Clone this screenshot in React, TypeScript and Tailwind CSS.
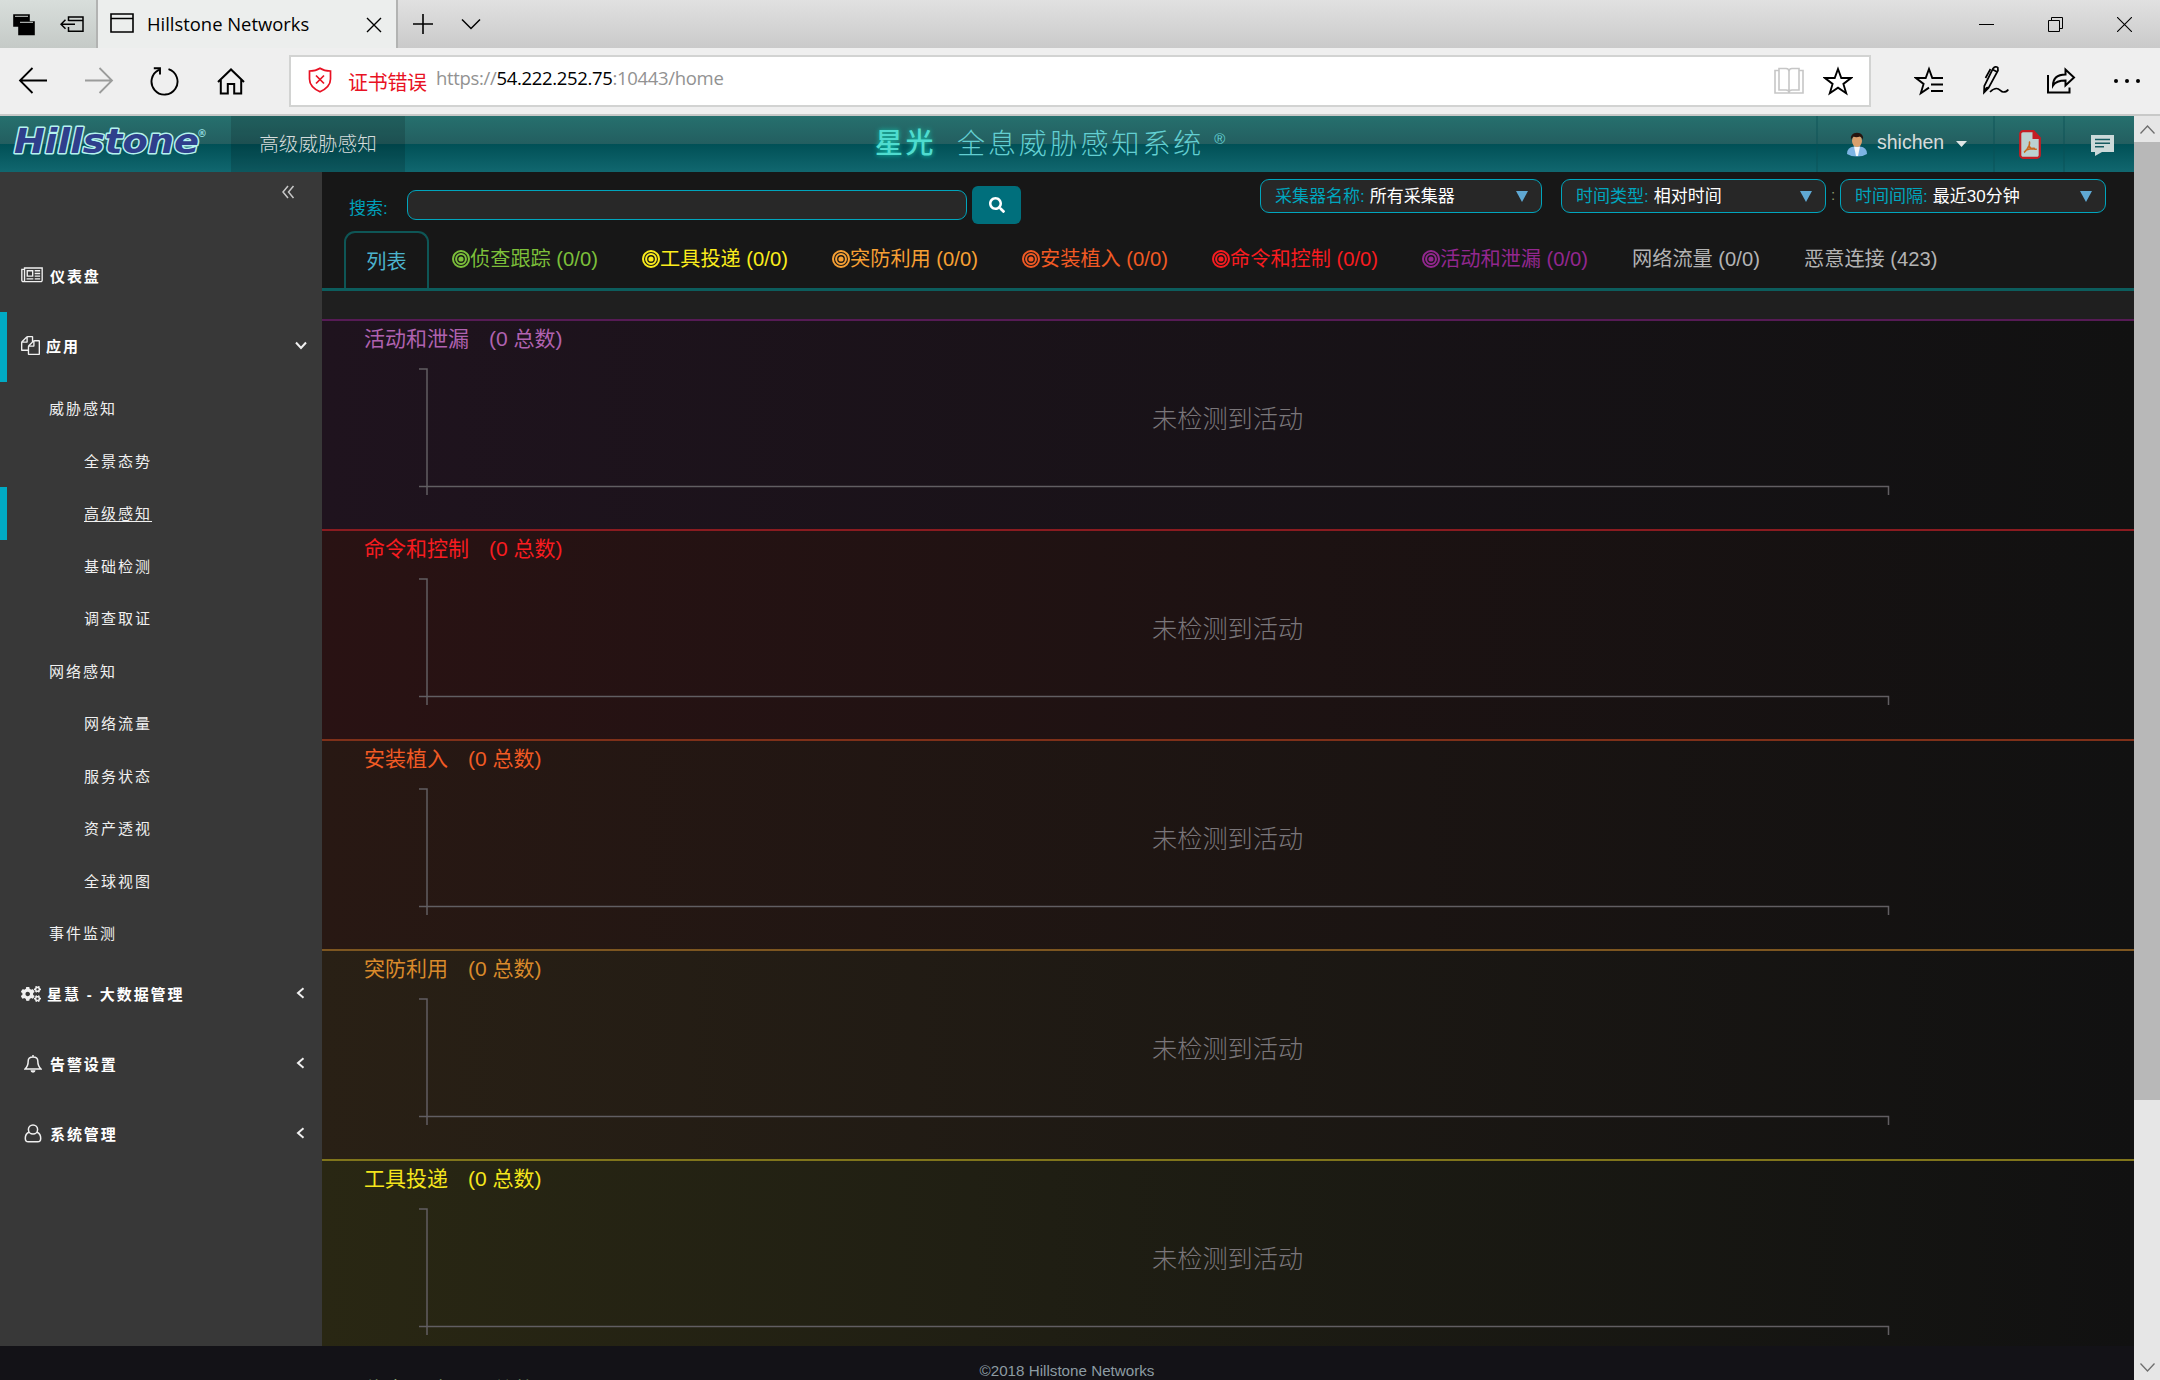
import React from "react";
import { FaCogs, FaSearch } from "react-icons/fa";

const CJK = "font-['Liberation_Sans','Noto_Sans_CJK_SC',sans-serif]";
const UI = "font-['Open_Sans','Noto_Sans_CJK_SC',sans-serif]";

type IconProps = { w: number; h: number; sw?: number; className?: string; children: React.ReactNode };

function Icon({ w, h, sw = 1.6, className = "", children }: IconProps) {
  return (
    <svg
      width={w}
      height={h}
      viewBox={`0 0 ${w} ${h}`}
      fill="none"
      stroke="currentColor"
      strokeWidth={sw}
      className={`shrink-0 ${className}`}
    >
      {children}
    </svg>
  );
}

function TitleBar() {
  return (
    <div className="flex h-12 bg-linear-to-b from-[#e1e1e1] to-[#cacaca] text-black">
      <div className="flex w-24 items-center bg-linear-to-b from-[#d8dedb] to-[#c5cac7] pl-[13px]">
        <Icon w={22} h={22} className="mt-px">
          <path d="M1 1h15v11H1z" fill="currentColor" />
          <path d="M6 8h15v12.5H6z" fill="currentColor" />
          <path d="M2 2.3h13M7 8.3h13" stroke="#cfd4d1" strokeWidth="1" />
        </Icon>
        <Icon w={24} h={17} sw={1.5} className="ml-[25px]">
          <path d="M8.500 5V1H23v14.200H8.500V11M8.500 4.500H23M1 8.200h14M5.500 3.700L1 8.200l4.500 4.500" />
        </Icon>
      </div>
      <div className="flex w-[302px] items-center border-x-2 border-[#b2b3b2] bg-[#eceeed] pl-3">
        <Icon w={24} h={20} className="mb-0.5">
          <path d="M1 1h22v18H1zM1 5.500h22" />
        </Icon>
        <span className={`ml-[13px] w-[200px] text-[18.400px] leading-6 tracking-[0px] ${UI}`}>Hillstone Networks</span>
        <Icon w={16} h={16} sw={1.4} className="ml-[19px] mt-px">
          <path d="M1 1l14 14M15 1L1 15" />
        </Icon>
      </div>
      <div className="flex flex-1 items-center pl-[15px]">
        <Icon w={20} h={20}>
          <path d="M10 0v20M0 10h20" />
        </Icon>
        <Icon w={20} h={12} sw={1.5} className="ml-[28px]">
          <path d="M1 1.500l9 9 9-9" />
        </Icon>
      </div>
      <div className="flex items-center gap-[54px] pr-7">
        <Icon w={15} h={15} sw={1}>
          <path d="M0 7.500h15" />
        </Icon>
        <Icon w={15} h={15} sw={1}>
          <path d="M.5 3.500h11v11H.5zM3.500 3.500v-3h11v11h-3" />
        </Icon>
        <Icon w={15} h={15} sw={1.1}>
          <path d="M0 0l15 15M15 0L0 15" />
        </Icon>
      </div>
    </div>
  );
}

function Cell({ children }: { children: React.ReactNode }) {
  return <div className="flex w-[66px] items-center justify-center">{children}</div>;
}

function Toolbar() {
  return (
    <div className="flex h-[68px] border-b-2 border-[#c8c9c8] bg-[#efefef] text-black">
      <div className="flex">
        <Cell>
          <Icon w={30} h={27} sw={1.800} className="-mt-px">
            <path d="M29 13.500H2M14.500 1L2 13.500 14.500 26" />
          </Icon>
        </Cell>
        <Cell>
          <Icon w={30} h={27} sw={1.8} className="-mt-px text-[#9b9c9b]">
            <path d="M1 13.500h27M15.500 1L28 13.500 15.500 26" />
          </Icon>
        </Cell>
        <Cell>
          <Icon w={30} h={30} sw={1.9}>
            <path d="M18.500 3.200A13 13 0 1 1 9 3.800M3.800 2.200H10v6.300" />
          </Icon>
        </Cell>
        <Cell>
          <Icon w={28} h={27} sw={2}>
            <path d="M1 14L14 1.500 27 14M3.800 12v13.500h7V16h6.400v9.500h7V12" />
          </Icon>
        </Cell>
      </div>
      <div className="mt-[7px] ml-[25px] flex h-[52px] w-[1582px] items-center border-2 border-[#d2d3d2] bg-white">
        <Icon w={24} h={26} sw={1.7} className="ml-[17px] mb-0.5 text-[#e81123]">
          <path d="M12 1.200c3 2 6.500 2.800 10.500 2.800v8c0 6-4.500 10-10.500 12.800C6 22 1.500 18 1.500 12V4C5.500 4 9 3.200 12 1.200zM8 8.500l8 8M16 8.500l-8 8" />
        </Icon>
        <span className={`mt-1 ml-[16px] w-[88px] text-[20px] leading-6 font-normal tracking-[-0.300px] text-[#e81123] ${UI}`}>证书错误</span>
        <span className={`mb-1.5 text-[18.500px] leading-6 tracking-[-0.330px] text-[#929292] ${UI}`}>
          https://<span className="text-black">54.222.252.75</span>:10443/home
        </span>
        <Icon w={30} h={28} sw={1.600} className="ml-auto text-[#c6c6c6]">
          <path d="M5 3.500H1V26h28V3.500h-4M5 1.500h7q3 0 3 3 0-3 3-3h7v21.500h-7q-3 0-3 2.500 0-2.500-3-2.500H5zM15 4v22" />
        </Icon>
        <Icon w={30} h={30} sw={1.900} className="mr-[16px] ml-[19px]">
          <path d="M15 3l3.300 9H28l-7.600 5.900 2.800 9.300L15 21.600l-8.200 5.600 2.800-9.300L2 12h9.700z" />
        </Icon>
      </div>
      <div className="ml-auto flex">
        <Cell>
          <Icon w={30} h={30} sw={1.900}>
            <path d="M29 12h-10.700L15 3l-3.300 9H2l7.600 5.900-2.800 9.300L15 21.600M17 18.500h12M17 25h12M18 12h11" />
          </Icon>
        </Cell>
        <Cell>
          <Icon w={28} h={30} sw={1.700} className="mb-0.5">
            <path d="M12 3.500q2.500-3 4.800-.8L17 5.500 7.500 23 3 27.500l.3-6.500zM11.500 4.500l4.800 2.500M9.500 4L4.500 13M3 27.500c2-5 3-6 5-4" />
            <path d="M9 27c2-2 4-3.500 6.500-3.500 3.500 0 4 3.500 7 3.500 2.500 0 4-1.200 4.800-2.500" />
          </Icon>
        </Cell>
        <Cell>
          <Icon w={30} h={28} sw={2}>
            <path d="M2 8v17.500h21.500v-5M7 18.500c0-8 5-11 12.500-11V2.500l8.500 8-8.500 8v-5c-6 0-10 1-12.500 5z" />
          </Icon>
        </Cell>
        <Cell>
          <Icon w={28} h={6} sw={0}>
            <g fill="currentColor">
              <circle cx="3" cy="3" r="2" />
              <circle cx="14" cy="3" r="2" />
              <circle cx="25" cy="3" r="2" />
            </g>
          </Icon>
        </Cell>
      </div>
    </div>
  );
}

function Header() {
  return (
    <header
      className={`flex h-14 bg-[linear-gradient(to_bottom,#26706e_0%,#235e60_50%,#005056_50%,#11676f_100%)] text-[#d5dcdc] ${CJK}`}
    >
      <div className="w-[231px] pt-2 pl-2.5">
        <svg width="200" height="36" viewBox="0 0 200 36" className="overflow-visible font-['DejaVu_Sans',sans-serif] font-bold italic">
          <text
            x="4" y="29" fontSize="33" textLength="185" lengthAdjust="spacingAndGlyphs"
            fill="#2f3f8c" stroke="#b5f3ee" strokeWidth="2.800" paintOrder="stroke" strokeLinejoin="round"
          >
            Hillstone
          </text>
          <text x="187" y="13" fontSize="10" fontStyle="normal" fill="#8fd8dc">®</text>
        </svg>
      </div>
      <div className="flex w-[174px] items-center justify-center bg-black/15 pt-px text-[19.600px] font-light">高级威胁感知</div>
      <div className="flex flex-1 items-center">
        <span className="ml-[470px] text-[28px] leading-none font-medium tracking-[2.500px] text-[#4fdccf] [text-shadow:0_0_5px_#12c8b0]">
          星光
        </span>
        <span className="ml-[21px] pt-px text-[28px] leading-none font-light tracking-[2.900px] text-[#62cfd2]">全息威胁感知系统</span>
        <span className="mb-3 ml-2.5 text-[15px] leading-none text-[#62cfd2]">®</span>
      </div>
      <div className="flex w-[177px] items-center border-l-2 border-[#0b4f54]/40 pl-[28px]">
        <svg width="22" height="25" viewBox="0 0 22 25">
          <path d="M1 22q0-7 7-7.500h6q7 .5 7 7.500-4 2.500-10 2.500T1 22z" fill="#7db4e4" />
          <path d="M8 14.500h6l-2 9.500h-2z" fill="#f4f6f8" />
          <ellipse cx="11" cy="9" rx="5" ry="6" fill="#d9a06c" />
          <path d="M5 8Q4 1 11 .8 18 1 17 8q-1-3-3-3.500Q10 6 7.500 4.500 5.500 6 5 8z" fill="#26150f" />
        </svg>
        <span className="ml-[9px] w-[69px] pb-0.5 text-[19.500px] leading-none">shichen</span>
        <svg width="11" height="6" viewBox="0 0 11 6" className="ml-2.5">
          <path d="M0 0h11L5.500 6z" fill="#dfe6e6" />
        </svg>
      </div>
      <div className="flex w-[70px] items-center justify-center border-l-2 border-[#0b4f54]/40">
        <svg width="22" height="29" viewBox="0 0 22 29" className="ml-0.5">
          <path d="M4 1.200h10.500L20.800 8v17a2.800 2.800 0 0 1-2.800 2.800H4A2.800 2.800 0 0 1 1.200 25V4A2.800 2.800 0 0 1 4 1.200z" fill="#bcd2d1" stroke="#c41e24" strokeWidth="2.200" />
          <path d="M13.500 1v8h8z" fill="#c41e24" />
          <path d="M10.200 11.500q.8 1-.2 4.500M9.800 16Q8 20.500 5 22.500M9.800 16q2.200 3.800 8 3.200M7 20q5-2 9-1.500" fill="none" stroke="#c8691e" strokeWidth="1.600" />
        </svg>
      </div>
      <div className="flex w-[71px] items-center border-l-2 border-[#0b4f54]/40 pl-[26px]">
        <svg width="23" height="21" viewBox="0 0 23 21" className="mt-0.5">
          <path d="M0 0h23v17H11l-7 4v-4H0z" fill="#ccd9d9" />
          <path d="M4 4.500h15M4 8.200h15M4 11.800h9" stroke="#155a60" strokeWidth="1.600" />
        </svg>
      </div>
    </header>
  );
}

const subItems: { t: string; deep?: boolean; active?: boolean }[] = [
  { t: "威胁感知" },
  { t: "全景态势", deep: true },
  { t: "高级感知", deep: true, active: true },
  { t: "基础检测", deep: true },
  { t: "调查取证", deep: true },
  { t: "网络感知" },
  { t: "网络流量", deep: true },
  { t: "服务状态", deep: true },
  { t: "资产透视", deep: true },
  { t: "全球视图", deep: true },
  { t: "事件监测" },
];

function TopItem({ icon, label, gap, arrow, active }: { icon: React.ReactNode; label: string; gap: string; arrow?: "down" | "left"; active?: boolean }) {
  return (
    <div className={`flex h-[70px] items-center border-l-[7px] pr-[14px] pl-[14px] ${active ? "border-[#00aac4]" : "border-transparent"}`}>
      {icon}
      <span className={`text-[15px] font-bold tracking-[1.900px] text-white ${gap}`}>{label}</span>
      {arrow === "down" && (
        <Icon w={14} h={9} sw={2} className="ml-auto mb-1">
          <path d="M2 1.500l5 5.500 5-5.500" />
        </Icon>
      )}
      {arrow === "left" && (
        <Icon w={9} h={12} sw={2} className="ml-auto mr-[3px] mb-1">
          <path d="M7.500 1.200L2 6l5.500 4.800" />
        </Icon>
      )}
    </div>
  );
}

function Sidebar() {
  return (
    <aside className={`w-[322px] shrink-0 bg-[#383838] text-[#f0f0f0] ${CJK}`}>
      <div className="flex h-[70px] justify-end pt-[13px] pr-[27px]">
        <Icon w={14} h={14} sw={1.500} className="text-[#c8c8c8]">
          <path d="M7 1L2 7l5 6M12.500 1l-5 6 5 6" />
        </Icon>
      </div>
      <TopItem
        gap="ml-[7px] mt-px"
        label="仪表盘"
        icon={
          <svg width="22" height="19" viewBox="0 0 2048 1792" fill="currentColor" className="mb-1">
            <path d="M1024 512h-384v384h384v-384zm128 640v128h-640v-128h640zm0-768v640h-640v-640h640zm640 768v128h-512v-128h512zm0-256v128h-512v-128h512zm0-256v128h-512v-128h512zm0-256v128h-512v-128h512zm-1536 960v-960h-128v960q0 26 19 45t45 19 45-19 19-45zm1664 0v-1088h-1536v1088q0 33-11 64h1483q26 0 45-19t19-45zm128-1216v1216q0 80-56 136t-136 56h-1664q-80 0-136-56t-56-136v-1088h256v-128h1792z" />
          </svg>
        }
      />
      <TopItem
        active
        arrow="down"
        gap="ml-[6px]"
        label="应用"
        icon={
          <svg width="19" height="19" viewBox="0 0 1792 1792" fill="currentColor" className="mb-1">
            <path d="M1696 384q40 0 68 28t28 68v1216q0 40-28 68t-68 28h-960q-40 0-68-28t-28-68v-288h-544q-40 0-68-28t-28-68v-672q0-40 20-88t48-76l408-408q28-28 76-48t88-20h416q40 0 68 28t28 68v328q68-40 128-40h416zm-544 213l-299 299h299v-299zm-640-384l-299 299h299v-299zm196 647l316-316v-416h-384v416q0 40-28 68t-68 28h-416v640h512v-256q0-40 20-88t48-76zm956 804v-1152h-384v416q0 40-28 68t-68 28h-416v640h896z" />
          </svg>
        }
      />
      {subItems.map((s) => (
        <div
          key={s.t}
          className={`flex h-[52.500px] items-center border-l-[7px] pt-0.5 ${s.active ? "border-[#00aac4]" : "border-transparent"} ${s.deep ? "pl-[77px]" : "pl-[42px]"}`}
        >
          <span className={`text-[15px] leading-5 tracking-[2px] ${s.active ? "underline underline-offset-2" : ""}`}>{s.t}</span>
        </div>
      ))}
      <TopItem arrow="left" gap="ml-[6px] mt-px" label="星慧 - 大数据管理" icon={<FaCogs size={20} className="mb-0.5" />} />
      <TopItem
        arrow="left"
        gap="ml-2 mt-px"
        label="告警设置"
        icon={
          <Icon w={18} h={18} sw={1.500} className="ml-[3px] mb-0.5">
            <path d="M9 0v2M1 14q3.200-3 3.200-8 0-4 4.800-4t4.800 4q0 5 3.200 8z" />
            <path d="M6.500 15.200a2.500 2.500 0 0 0 5 0z" fill="currentColor" stroke="none" />
          </Icon>
        }
      />
      <TopItem
        arrow="left"
        gap="ml-2 mt-px"
        label="系统管理"
        icon={
          <Icon w={18} h={19} sw={1.500} className="ml-[3px] mb-0.5">
            <circle cx="9" cy="5.500" r="4.600" />
            <path d="M5 8.200q-3.700 1.500-3.700 6 0 3.600 3 3.600h9.400q3 0 3-3.600 0-4.500-3.700-6" />
          </Icon>
        }
      />
    </aside>
  );
}

function Select({ label, value, w }: { label: string; value: string; w: string }) {
  return (
    <div className={`flex h-[34px] items-center rounded-[9px] border-[1.500px] border-[#00a5bd] bg-[#272727] pr-[13px] pl-[14px] text-[17px] leading-none ${w}`}>
      <span className="pt-px text-[#00a5bd]">{label}:</span>
      <span className="ml-[5px] pt-px text-white">{value}</span>
      <svg width="12" height="11" viewBox="0 0 12 11" className="ml-auto">
        <path d="M0 0h12L6 11z" fill="#5fa8d3" />
      </svg>
    </div>
  );
}

const tabs: { t: string; c: string; w: string; plain?: boolean }[] = [
  { t: "侦查跟踪 (0/0)", c: "text-[#7cbf3a]", w: "w-[190px]" },
  { t: "工具投递 (0/0)", c: "text-[#fbec1c]", w: "w-[190px]" },
  { t: "突防利用 (0/0)", c: "text-[#f7a034]", w: "w-[190px]" },
  { t: "安装植入 (0/0)", c: "text-[#f15a24]", w: "w-[190px]" },
  { t: "命令和控制 (0/0)", c: "text-[#f81c20]", w: "w-[210px]" },
  { t: "活动和泄漏 (0/0)", c: "text-[#93278f]", w: "w-[210px]" },
  { t: "网络流量 (0/0)", c: "text-[#b3b3b3]", w: "w-[172px]", plain: true },
  { t: "恶意连接 (423)", c: "text-[#b3b3b3]", w: "w-[172px]", plain: true },
];

const lanes = [
  { t: "活动和泄漏", c: "text-[#b062b0]", b: "border-[#561b55]", g: "from-[#1f131e]" },
  { t: "命令和控制", c: "text-[#f81c20]", b: "border-[#8a1b20]", g: "from-[#291213]" },
  { t: "安装植入", c: "text-[#f15a24]", b: "border-[#7f3019]", g: "from-[#281813]" },
  { t: "突防利用", c: "text-[#d98a2b]", b: "border-[#7d5620]", g: "from-[#292015]" },
  { t: "工具投递", c: "text-[#f5e61c]", b: "border-[#80751b]", g: "from-[#292713]" },
];

function Lane({ t, c, b, g }: (typeof lanes)[number]) {
  return (
    <section className={`flex h-[210px] shrink-0 flex-col border-t-2 bg-linear-to-r to-[#111111] ${b} ${g}`}>
      <h2 className={`flex h-[36px] items-center gap-5 pb-0.5 pl-[42px] text-[21px] leading-none font-normal ${c}`}>
        <span>{t}</span>
        <span>(0 总数)</span>
      </h2>
      <div className="relative mt-[11px] ml-[97px] h-[128px] w-[1471px]">
        <svg width="1471" height="128" viewBox="0 0 1471 128" fill="none" stroke="#615e62" strokeWidth="1.500">
          <path d="M0 1h8v126M0 118.500h1469.500v8.500" />
        </svg>
        <span className="absolute top-[38px] left-[733px] w-[152px] text-[25.200px] leading-[26px] font-light whitespace-nowrap text-[#7a767a]">
          未检测到活动
        </span>
      </div>
    </section>
  );
}

function Main() {
  return (
    <main className={`flex min-w-0 flex-1 flex-col overflow-hidden bg-[#171717] ${CJK}`}>
      <div className="flex h-[59px] shrink-0">
        <div className="flex w-[85px] justify-start pt-[28px] pl-[27px] text-[17px] leading-none text-[#00a0ba]">搜索:</div>
        <div className="mt-[18px] h-[30px] w-[560px] rounded-[9px] border-[1.500px] border-[#00a5bd] bg-[#282828]" />
        <div className="mt-3.5 ml-[5px] flex h-[38px] w-[49px] items-center justify-center rounded-[6px] bg-[#006f7c] text-white">
          <FaSearch size={16} />
        </div>
        <div className="mt-[7px] mr-[28px] ml-auto flex">
          <Select label="采集器名称" value="所有采集器" w="w-[282px]" />
          <Select label="时间类型" value="相对时间" w="ml-[19px] w-[265px]" />
          <span className="w-3.5 pt-2 text-center text-[15px] leading-none text-[#8d9a6c]">:</span>
          <Select label="时间间隔" value="最近30分钟" w="w-[266px]" />
        </div>
      </div>
      <div className="flex h-[60px] shrink-0 border-b-[3px] border-[#0c5d5d] pl-[22px] text-[20.200px] leading-none whitespace-nowrap">
        <div className="mr-[23px] flex w-[85px] items-center justify-center rounded-t-[11px] border-2 border-b-0 border-[#0e5656] pt-1 text-[#4bb3cc]">
          列表
        </div>
        {tabs.map((t) => (
          <div key={t.t} className={`flex items-center pb-px ${t.w} ${t.c}`}>
            {!t.plain && (
              <svg width="18" height="18" viewBox="0 0 18 18" fill="none" stroke="currentColor" strokeWidth="2" className="shrink-0">
                <circle cx="9" cy="9" r="8" />
                <circle cx="9" cy="9" r="4.900" />
                <circle cx="9" cy="9" r="2.600" fill="currentColor" stroke="none" />
              </svg>
            )}
            <span>{t.t}</span>
          </div>
        ))}
      </div>
      <div className="h-7 shrink-0 bg-[#1f1f1f]" />
      {lanes.map((l) => (
        <Lane key={l.t} {...l} />
      ))}
    </main>
  );
}

export default function App() {
  return (
    <div className="flex h-[1380px] w-[2160px] flex-col overflow-hidden bg-[#131217]">
      <TitleBar />
      <Toolbar />
      <div className="flex h-[1264px]">
        <div className="flex w-[2134px] flex-col">
          <Header />
          <div className="flex h-[1174px]">
            <Sidebar />
            <Main />
          </div>
          <footer className={`relative h-[34px] text-center text-[15.200px] leading-[17px] text-[#8d9ca3] ${CJK}`}>
            <p className="pt-[16px]">©2018 Hillstone Networks</p>
            <div className="absolute top-[32px] left-[364px] flex h-0.5 gap-5 overflow-hidden text-[21px] leading-[23px] text-[#a9c98a]">
              <span>侦查跟踪</span>
              <span>(0 总数)</span>
            </div>
          </footer>
        </div>
        <div className="flex w-[26px] flex-col bg-[#e6e6e6] text-[#6e6e6e]">
          <div className="flex h-[26px] items-center justify-center">
            <Icon w={15} h={9} sw={1.300}>
              <path d="M.5 8.500l7-7.500 7 7.500" />
            </Icon>
          </div>
          <div className="h-[958px] bg-[#b8b8b8]" />
          <div className="mt-auto flex h-[26px] items-center justify-center">
            <Icon w={15} h={9} sw={1.300}>
              <path d="M.5 .5l7 7.500 7-7.500" />
            </Icon>
          </div>
        </div>
      </div>
    </div>
  );
}
